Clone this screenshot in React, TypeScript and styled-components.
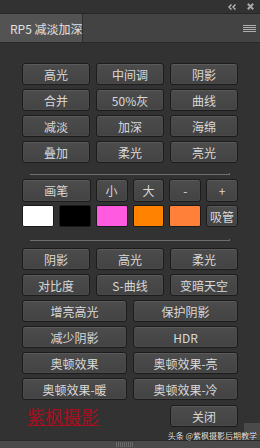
import React from 'react';
import styled, { createGlobalStyle } from 'styled-components';

const GlobalStyle = createGlobalStyle`
  html, body {
    margin: 0;
    padding: 0;
    background: #323232;
  }
`;

const Panel = styled.div`
  width: 260px;
  height: 448px;
  background: #323232;
  display: flex;
  flex-direction: column;
  position: relative;
  overflow: hidden;
  font-family: 'Noto Sans CJK SC', 'Noto Sans', sans-serif;
`;

const TopStrip = styled.div`
  height: 13px;
  border-bottom: 1px solid #272727;
  display: flex;
  justify-content: flex-end;
  align-items: center;
  gap: 11px;
  padding-right: 6px;
`;

const TabBar = styled.div`
  height: 28px;
  background: #434343;
  border-bottom: 1px solid #282828;
  display: flex;
  align-items: stretch;
`;

const Tab = styled.div`
  width: 83px;
  background: #535353;
  border-right: 1px solid #2e2e2e;
  color: #e2e2e2;
  font-size: 12px;
  display: flex;
  align-items: center;
  padding-left: 10px;
  box-sizing: border-box;
  white-space: nowrap;
`;

const MenuBtn = styled.div`
  margin-left: auto;
  margin-right: 4px;
  display: flex;
  align-items: center;
`;

const Content = styled.div`
  padding: 20px 22px 0;
  display: flex;
  flex-direction: column;
`;

const Grid = styled.div<{ $cols: number }>`
  display: grid;
  grid-template-columns: repeat(${(p) => p.$cols}, 1fr);
  gap: 4px 6px;
`;

const ToolGrid = styled.div`
  display: grid;
  grid-template-columns: repeat(6, 1fr);
  grid-template-rows: 23px 22px;
  gap: 3px 5px;
`;

const Button = styled.div<{ $span?: number }>`
  grid-column: span ${(p) => p.$span || 1};
  height: 22px;
  box-sizing: border-box;
  border: 1px solid #1c1c1c;
  border-radius: 3px;
  background: linear-gradient(#4c4c4c, #434343);
  box-shadow: inset 0 1px 0 #5a5a5a, inset 0 0 0 1px #4a4a4a;
  color: #d9d9d9;
  font-size: 12px;
  display: flex;
  align-items: center;
  justify-content: center;
  white-space: nowrap;
`;

const Swatch = styled.div<{ $color: string }>`
  height: 22px;
  box-sizing: border-box;
  border: 1px solid #1a1a1a;
  border-radius: 2px;
  background: ${(p) => p.$color};
`;

const Separator = styled.div<{ $top: number; $bottom: number }>`
  margin: ${(p) => p.$top}px 8px ${(p) => p.$bottom}px;
  height: 2px;
  box-sizing: border-box;
  border-bottom: 1px solid #6e6e6e;
  border-right: 1px solid #6e6e6e;
`;

const Footer = styled.div`
  display: grid;
  grid-template-columns: repeat(3, 1fr);
  gap: 6px;
  margin-top: 5px;
  align-items: center;
`;

const Brand = styled.div`
  grid-column: span 2;
  padding-left: 5px;
  color: #a4101f;
  font-size: 18px;
  text-decoration: underline;
  text-underline-offset: 1px;
  line-height: 20px;
`;

const BottomBar = styled.div`
  margin-top: auto;
  height: 7px;
  background: #4a4a4a;
  border-top: 1px solid #2a2a2a;
  display: flex;
  justify-content: center;
  padding-right: 10px;
`;

const Grip = styled.div`
  width: 18px;
  height: 5px;
  margin-top: 1px;
  background: repeating-linear-gradient(90deg, #6a6a6a 0 1px, transparent 1px 2px);
`;

const Corner = styled.div`
  position: absolute;
  right: 0;
  bottom: 8px;
  width: 16px;
  height: 17px;
  background: #4a4a4a;
`;

const Watermark = styled.div`
  position: absolute;
  right: 3px;
  bottom: 7px;
  color: #e8e8e8;
  font-size: 8px;
  line-height: 10px;
  white-space: nowrap;
  text-shadow: 0 0 1px #000;
`;

const topButtons = ['高光', '中间调', '阴影', '合并', '50%灰', '曲线', '减淡', '加深', '海绵', '叠加', '柔光', '亮光'];
const swatches = ['#ffffff', '#000000', '#ff5ae0', '#ff8300', '#ff8038'];

const App: React.FC = () => {
  return (
    <Panel>
      <GlobalStyle />
      <TopStrip>
        <svg width="8" height="6" viewBox="0 0 8 6">
          <path d="M3.5 0.5 L1 3 L3.5 5.5 M7.5 0.5 L5 3 L7.5 5.5" stroke="#b8b8b8" strokeWidth="1.4" fill="none" />
        </svg>
        <svg width="7" height="7" viewBox="0 0 7 7">
          <path d="M0.8 0.8 L6.2 6.2 M6.2 0.8 L0.8 6.2" stroke="#a8a8a8" strokeWidth="2" />
        </svg>
      </TopStrip>
      <TabBar>
        <Tab>RP5 减淡加深</Tab>
        <MenuBtn>
          <svg width="13" height="7" viewBox="0 0 13 7">
            <path d="M0 0.5 H13 M0 2.5 H13 M0 4.5 H13 M0 6.5 H13" stroke="#b0b0b0" strokeWidth="1" />
          </svg>
        </MenuBtn>
      </TabBar>
      <Content>
        <Grid $cols={3}>
          {topButtons.map((t) => (
            <Button key={t}>{t}</Button>
          ))}
        </Grid>
        <Separator $top={10} $bottom={4} />
        <ToolGrid>
          <Button $span={2} style={{ height: 23 }}>画笔</Button>
          <Button style={{ height: 23 }}>小</Button>
          <Button style={{ height: 23 }}>大</Button>
          <Button style={{ height: 23 }}>-</Button>
          <Button style={{ height: 23 }}>+</Button>
          {swatches.map((c) => (
            <Swatch key={c} $color={c} />
          ))}
          <Button>吸管</Button>
        </ToolGrid>
        <Separator $top={12} $bottom={7} />
        <Grid $cols={3}>
          {['阴影', '高光', '柔光', '对比度', 'S-曲线', '变暗天空'].map((t) => (
            <Button key={t}>{t}</Button>
          ))}
        </Grid>
        <Grid $cols={2} style={{ marginTop: 4 }}>
          {['增亮高光', '保护阴影', '减少阴影', 'HDR', '奥顿效果', '奥顿效果-亮', '奥顿效果-暖', '奥顿效果-冷'].map((t) => (
            <Button key={t}>{t}</Button>
          ))}
        </Grid>
        <Footer>
          <Brand>紫枫摄影</Brand>
          <Button>关闭</Button>
        </Footer>
      </Content>
      <BottomBar>
        <Grip />
      </BottomBar>
      <Corner />
      <Watermark>头条 @紫枫摄影后期教学</Watermark>
    </Panel>
  );
};

export default App;
